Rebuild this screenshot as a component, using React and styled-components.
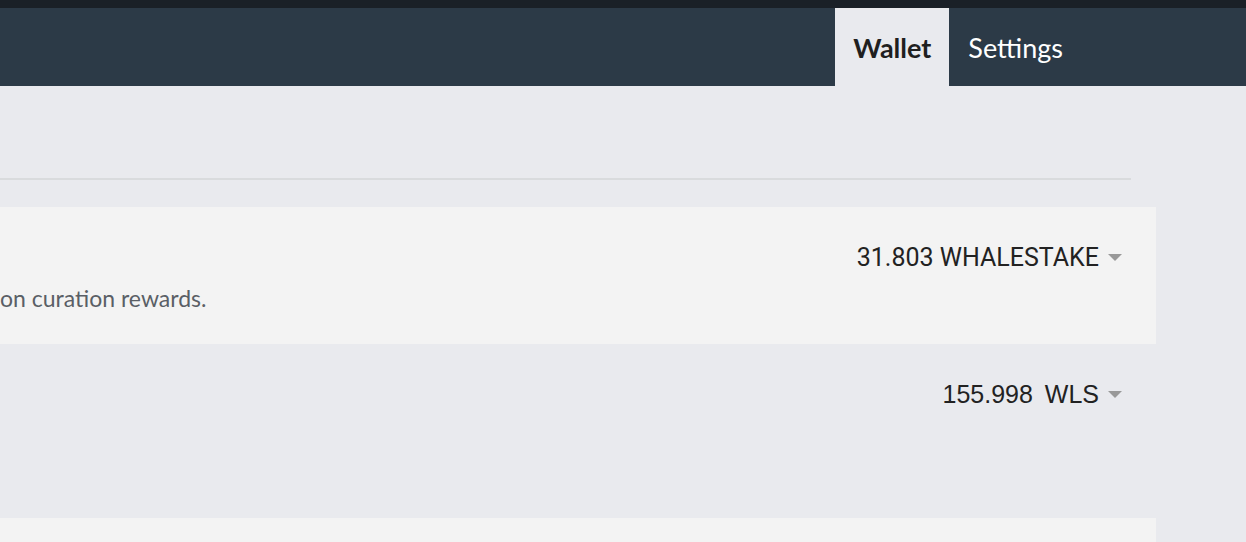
import styled, { createGlobalStyle } from "styled-components"

const GlobalStyle = createGlobalStyle`
    body {
        margin: 0;
        background: #e9eaee;
        font-family: Lato, "Liberation Sans", sans-serif;
    }
`;

const TopStrip = styled.div`
    height: 8px;
    background: #1a2027;
`;

const NavBar = styled.nav`
    height: 78px;
    background: #2c3a47;
    display: flex;
    justify-content: flex-end;
    padding-right: 164px;
`;

const NavTab = styled.a`
    display: flex;
    align-items: center;
    padding: 1px ${(p) => (p.active ? 18 : 19)}px 0;
    font-family: Lato, sans-serif;
    font-size: 27px;
    font-weight: ${(p) => (p.active ? 700 : 400)};
    color: ${(p) => (p.active ? "#1f1f1f" : "#ffffff")};
    background: ${(p) => (p.active ? "#e9eaee" : "transparent")};
`;

const Main = styled.main`
    width: 1156px;
`;

const Header = styled.div`
    height: 92px;
`;

const Divider = styled.hr`
    margin: 0 25px 27px 0;
    border: 0;
    height: 2px;
    background: #d9dbdd;
`;

const Row = styled.div`
    background: ${(p) => (p.shaded ? "#f3f3f3" : "transparent")};
    height: ${(p) => p.height}px;
    padding: 35px 34px 0 0;
    box-sizing: border-box;
    display: flex;
    flex-direction: column;
`;

const ValueLine = styled.div`
    display: flex;
    justify-content: flex-end;
    align-items: center;
    height: 30px;
    color: #222;
    font-family: ${(p) => p.font};
    font-size: 25px;
    white-space: pre;
`;

const Unit = styled.span`
    margin-left: 5px;
`;

const Caret = styled.span`
    width: 0;
    height: 0;
    margin-left: 9px;
    border-left: 7px solid transparent;
    border-right: 7px solid transparent;
    border-top: 7px solid #999;
`;

const Description = styled.div`
    margin-top: 13px;
    line-height: 26px;
    font-family: Lato, sans-serif;
    font-size: 23px;
    color: #5a5f66;
`;

const App = () => {
    return (
        <>
            <GlobalStyle />
            <TopStrip />
            <NavBar>
                <NavTab active>Wallet</NavTab>
                <NavTab>Settings</NavTab>
            </NavBar>
            <Main>
                <Header />
                <Divider />
                <Row shaded height={137}>
                    <ValueLine font="Roboto, sans-serif">
                        31.803 WHALESTAKE
                        <Caret />
                    </ValueLine>
                    <Description>on curation rewards.</Description>
                </Row>
                <Row height={174}>
                    <ValueLine font='"Liberation Sans", sans-serif'>
                        {"155.998 "}
                        <Unit>WLS</Unit>
                        <Caret />
                    </ValueLine>
                </Row>
                <Row shaded height={137} />
            </Main>
        </>
    )
}

export default App
